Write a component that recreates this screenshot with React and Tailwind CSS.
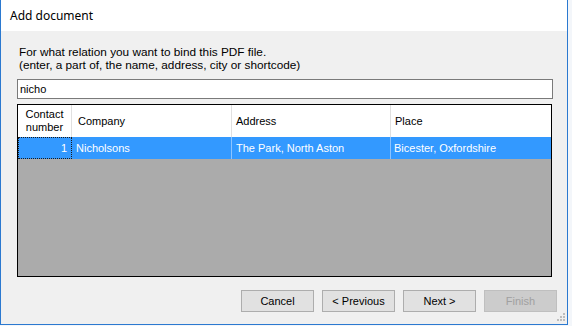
export default function App() {
  return (
    <div className="w-[572px] h-[326px] bg-[#f3f6fa] overflow-hidden">
      <div className="w-[568px] h-[325px] flex flex-col border-l border-r border-b border-[#2b79d0] bg-[#f0f0f0] relative">
        <div className="h-[31px] bg-white flex items-center pl-[9px] text-[12px] text-[#000] font-['Noto_Sans',sans-serif] shrink-0">
          Add document
        </div>

        <div className="flex-1 flex flex-col pl-[16px] pr-[14px] font-['Liberation_Sans',Arial,sans-serif] text-[11px] text-black">
          <div className="mt-[15px] ml-[2px] leading-[13px] text-[11.8px]">
            <div>For what relation you want to bind this PDF file.</div>
            <div>(enter, a part of, the name, address, city or shortcode)</div>
          </div>

          <div className="mt-[7px] h-[20px] w-[536px] border border-[#7a7a7a] bg-white flex items-center px-[2px] leading-none">
            nicho
          </div>

          <div className="mt-[5px] w-[535px] h-[173px] border border-[#000] bg-[#ababab] flex flex-col">
            <div className="h-[32px] bg-white flex shrink-0">
              <div className="w-[54px] border-r border-[#e0e0e0] flex items-center justify-center text-center leading-[13px]">
                Contact
                <br />
                number
              </div>
              <div className="w-[160px] border-r border-[#e0e0e0] flex items-center pl-[6px]">Company</div>
              <div className="w-[159px] border-r border-[#e0e0e0] flex items-center pl-[4px]">Address</div>
              <div className="flex-1 flex items-center pl-[4px]">Place</div>
            </div>
            <div className="h-[22px] bg-[#3399ff] text-white flex shrink-0">
              <div className="w-[54px] border border-dotted border-[#1a1a1a] flex items-center justify-end pr-[4px]">1</div>
              <div className="w-[160px] border-r border-[#8cc4ff] flex items-center pl-[4px]">Nicholsons</div>
              <div className="w-[159px] border-r border-[#8cc4ff] flex items-center pl-[4px]">The Park, North Aston</div>
              <div className="flex-1 flex items-center pl-[3px]">Bicester, Oxfordshire</div>
            </div>
          </div>

          <div className="mt-[13px] flex justify-end gap-[8px] mr-[-4px]">
            <button className="w-[73px] h-[22px] bg-[#e1e1e1] border border-[#adadad] leading-none">Cancel</button>
            <button className="w-[73px] h-[22px] bg-[#e1e1e1] border border-[#adadad] leading-none">&lt; Previous</button>
            <button className="w-[73px] h-[22px] bg-[#e1e1e1] border border-[#adadad] leading-none">Next &gt;</button>
            <button className="w-[73px] h-[22px] bg-[#cccccc] border border-[#bfbfbf] text-[#a0a0a0] leading-none">Finish</button>
          </div>
        </div>

        <svg className="absolute right-[2px] bottom-[3px]" width="8" height="8" viewBox="0 0 8 8">
          <rect x="6" y="0" width="2" height="2" fill="#bdbdbd" />
          <rect x="3" y="3" width="2" height="2" fill="#bdbdbd" />
          <rect x="6" y="3" width="2" height="2" fill="#bdbdbd" />
          <rect x="0" y="6" width="2" height="2" fill="#bdbdbd" />
          <rect x="3" y="6" width="2" height="2" fill="#bdbdbd" />
          <rect x="6" y="6" width="2" height="2" fill="#bdbdbd" />
        </svg>
      </div>
    </div>
  );
}
